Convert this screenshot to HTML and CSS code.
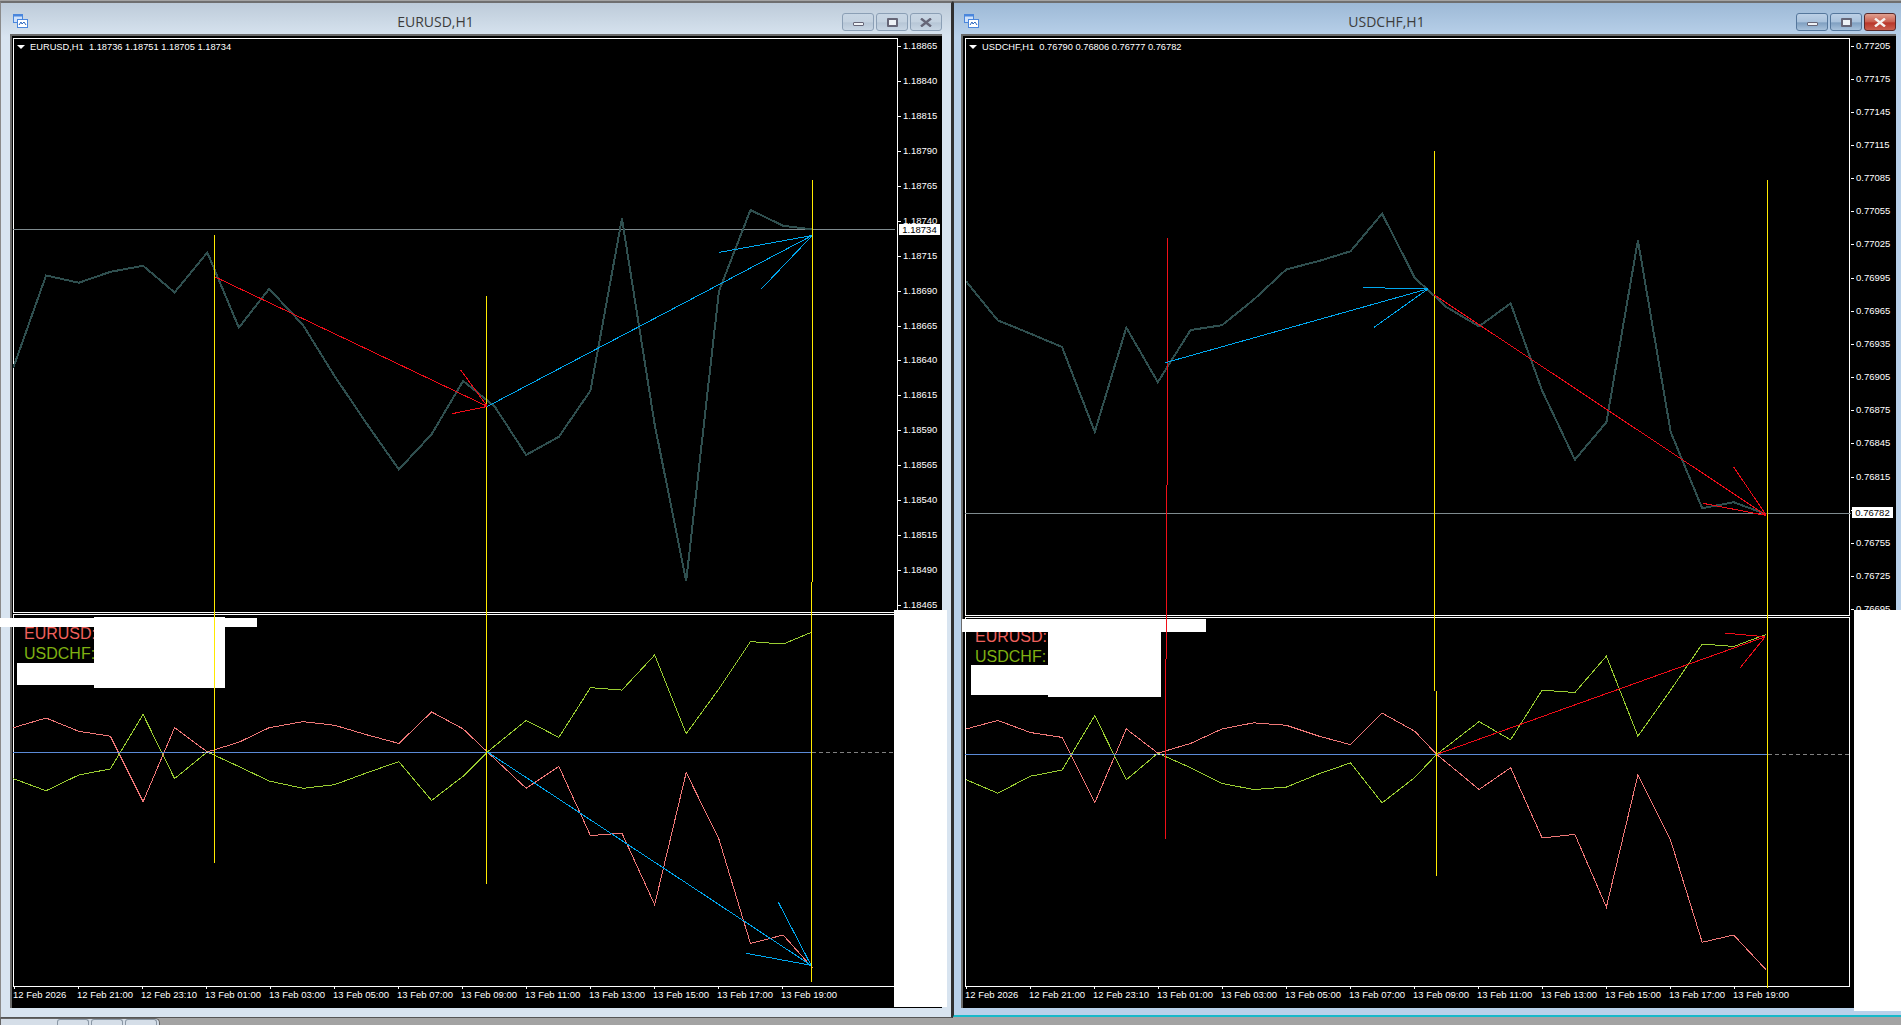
FILE: index.html
```html
<!DOCTYPE html>
<html lang="en">
<head>
<meta charset="utf-8">
<title>EURUSD,H1 / USDCHF,H1</title>
<link rel="stylesheet" href="styles.css">
</head>
<body>
<div class="desktop">

  <section class="window window-left">
    <header class="titlebar">
      <svg class="app-icon" viewBox="0 0 15 14"><rect x="0.5" y="0.5" width="9" height="8" fill="#cfe2fb" stroke="#4a86dc"/><rect x="0.5" y="0.5" width="9" height="2" fill="#4a86dc"/><rect x="4.5" y="5.5" width="10" height="8" fill="#fff" stroke="#4a86dc"/><path d="M6 11l2-3 1 2 2-2 2 3" fill="none" stroke="#2a66c0"/></svg>
      <h1 class="title">EURUSD,H1</h1>
      <div class="controls">
        <button class="ctl"><span class="i-min"></span></button>
        <button class="ctl"><span class="i-max"></span></button>
        <button class="ctl"><svg class="i-x" viewBox="0 0 12 9"><path d="M1 0.5l10 8M11 0.5l-10 8" fill="none" stroke="#667" stroke-width="2.4"/></svg></button>
      </div>
    </header>
    <div class="chart">
      <div class="pane pane-main">
        <div class="symbol"><i class="tri"></i><span>EURUSD,H1&nbsp; 1.18736 1.18751 1.18705 1.18734</span></div>
      </div>
      <div class="scale">
        <span>1.18865</span><span>1.18840</span><span>1.18815</span><span>1.18790</span><span>1.18765</span><span>1.18740</span><span>1.18715</span><span>1.18690</span><span>1.18665</span><span>1.18640</span><span>1.18615</span><span>1.18590</span><span>1.18565</span><span>1.18540</span><span>1.18515</span><span>1.18490</span><span>1.18465</span>
        <b class="price">1.18734</b>
      </div>
      <div class="pane pane-sub">
        <div class="legend"><span class="eur">EURUSD:</span><span class="chf">USDCHF:</span></div>
      </div>
      <div class="scale-empty"></div>
      <div class="times">
        <span>12 Feb 2026</span><span>12 Feb 21:00</span><span>12 Feb 23:10</span><span>13 Feb 01:00</span><span>13 Feb 03:00</span><span>13 Feb 05:00</span><span>13 Feb 07:00</span><span>13 Feb 09:00</span><span>13 Feb 11:00</span><span>13 Feb 13:00</span><span>13 Feb 15:00</span><span>13 Feb 17:00</span><span>13 Feb 19:00</span>
      </div>
    </div>
  </section>

  <section class="window window-right">
    <header class="titlebar">
      <svg class="app-icon" viewBox="0 0 15 14"><rect x="0.5" y="0.5" width="9" height="8" fill="#cfe2fb" stroke="#4a86dc"/><rect x="0.5" y="0.5" width="9" height="2" fill="#4a86dc"/><rect x="4.5" y="5.5" width="10" height="8" fill="#fff" stroke="#4a86dc"/><path d="M6 11l2-3 1 2 2-2 2 3" fill="none" stroke="#2a66c0"/></svg>
      <h1 class="title">USDCHF,H1</h1>
      <div class="controls">
        <button class="ctl"><span class="i-min"></span></button>
        <button class="ctl"><span class="i-max"></span></button>
        <button class="ctl ctl-close"><svg class="i-x" viewBox="0 0 12 9"><path d="M1 0.5l10 8M11 0.5l-10 8" fill="none" stroke="#f4f0ee" stroke-width="2.4"/></svg></button>
      </div>
    </header>
    <div class="chart">
      <div class="pane pane-main">
        <div class="symbol"><i class="tri"></i><span>USDCHF,H1&nbsp; 0.76790 0.76806 0.76777 0.76782</span></div>
      </div>
      <div class="scale">
        <span>0.77205</span><span>0.77175</span><span>0.77145</span><span>0.77115</span><span>0.77085</span><span>0.77055</span><span>0.77025</span><span>0.76995</span><span>0.76965</span><span>0.76935</span><span>0.76905</span><span>0.76875</span><span>0.76845</span><span>0.76815</span><span>0.76785</span><span>0.76755</span><span>0.76725</span><span>0.76695</span>
        <b class="price">0.76782</b>
      </div>
      <div class="pane pane-sub">
        <div class="legend"><span class="eur">EURUSD:</span><span class="chf">USDCHF:</span></div>
      </div>
      <div class="scale-empty"></div>
      <div class="times">
        <span>12 Feb 2026</span><span>12 Feb 21:00</span><span>12 Feb 23:10</span><span>13 Feb 01:00</span><span>13 Feb 03:00</span><span>13 Feb 05:00</span><span>13 Feb 07:00</span><span>13 Feb 09:00</span><span>13 Feb 11:00</span><span>13 Feb 13:00</span><span>13 Feb 15:00</span><span>13 Feb 17:00</span><span>13 Feb 19:00</span>
      </div>
    </div>
  </section>

  <div class="tabstrip"><i></i><i></i><i></i></div>

  <div class="patch p1"></div><div class="patch p2"></div><div class="patch p3"></div><div class="patch p4"></div>
  <div class="patch p5"></div><div class="patch p6"></div><div class="patch p7"></div><div class="patch p8"></div>

  <svg class="drawing" viewBox="0 0 1568 845">
    <g class="left">
      <line class="price-line" x1="11" y1="189" x2="738" y2="189"/>
      <polyline class="close" points="11,303 38,227 65,233 91,224 118,219 144,241 171,208 197,270 222,238 250,268 276,310 303,350 329,387 356,358 382,314 408,335 434,375 461,360 487,322 513,180 540,350 566,479 593,240 619,173 646,186 670,189"/>
      <polyline class="eur-line" points="11,600 38,592 65,603 91,607 118,661 144,600 171,620 197,612 222,600 250,595 276,598 303,606 329,613 356,587 382,601 402,620 434,650 461,632 487,689 513,687 540,746 566,637 593,692 619,778 646,771 670,798"/>
      <polyline class="chf-line" points="11,642 38,652 65,639 91,634 118,589 144,642 171,620 197,632 222,644 250,650 276,647 303,637 329,628 356,660 382,640 402,620 434,594 461,608 487,567 513,569 540,540 566,605 593,568 619,529 646,531 670,521"/>
      <line class="zero" x1="11" y1="620.5" x2="670" y2="620.5"/>
      <line class="zero-dash" x1="670" y1="620.5" x2="737" y2="620.5"/>
      <line class="knot" x1="167" y1="620.5" x2="177" y2="620.5"/>
      <path class="v-yellow" d="M177 194V712M401.5 244V729M670 148V480M669 480V810"/>
      <path class="arrow-red" d="M177 228L402 335M380 305L402 335M373 341L402 335"/>
      <path class="arrow-blue" d="M402 335L670 194M593 208L670 194M628 238L670 194"/>
      <path class="arrow-blue" d="M402 620L669 796M642 744L669 796M615 786L669 796"/>
    </g>
    <g class="right">
      <line class="price-line" x1="796" y1="423.5" x2="1527" y2="423.5"/>
      <polyline class="close" points="797,232 823,264 850,275 876,286 903,356 929,270 955,315 982,272 1008,268 1034,247 1061,222 1088,215 1114,207 1140,176 1167,229 1193,253 1220,269 1246,250 1272,322 1299,379 1325,348 1351,198 1378,356 1404,419 1430,414 1457,424"/>
      <polyline class="eur-line" points="797,601 823,594 850,604 876,608 903,662 929,601 955,621 982,613 1008,601 1034,596 1061,598 1088,607 1114,614 1140,588 1167,603 1185,622 1220,651 1246,633 1272,691 1299,688 1325,748 1351,639 1378,693 1404,777 1430,771 1457,800"/>
      <polyline class="chf-line" points="797,643 823,654 850,640 876,635 903,590 929,643 955,621 982,633 1008,646 1034,651 1061,649 1088,638 1114,629 1140,662 1167,641 1185,622 1220,595 1246,610 1272,569 1299,571 1325,541 1351,607 1378,569 1404,531 1430,533 1457,523"/>
      <line class="zero" x1="796" y1="622" x2="1458" y2="622"/>
      <line class="zero-dash" x1="1458" y1="622" x2="1527" y2="622"/>
      <line class="knot" x1="952" y1="622" x2="962" y2="622"/>
      <path class="v-red" d="M963 196V400M962 400V543M961 543V692"/>
      <path class="v-yellow" d="M1183 124V570M1185 570V722M1458 148V815"/>
      <path class="arrow-blue" d="M961 299L1178 238M1124 237L1178 238M1133 270L1178 238"/>
      <path class="arrow-red" d="M1183 243L1457 425M1430 385L1457 425M1405 415L1457 425"/>
      <path class="arrow-red" d="M1185 622L1456 525M1423 522L1456 525M1435 551L1456 525"/>
    </g>
  </svg>
</div>
</body>
</html>
```
FILE: styles.css
```css
* { box-sizing: border-box; }
html, body { margin: 0; height: 100%; overflow: hidden; }
body { background: #a3a3a3; font-family: "Liberation Sans", Arial, sans-serif; }

.desktop { position: relative; width: 1901px; height: 1025px; overflow: hidden; }

/* windows on the desktop */
.window {
  position: absolute;
  top: 1px;
  display: flex;
  flex-direction: column;
  border-top: 2px solid #6f6f6f;
}
.window-left {
  left: 0;
  width: 953px;
  height: 1017px;
  padding: 0 9px 9px 9px;
  border-left: 1px solid #8a8a8a;
  border-right: 2px solid #303030;
  border-bottom: 1px solid #555;
  background: linear-gradient(#bdcbd9 0, #d8e4f0 34px, #d8e4f0 100%);
}
.window-right {
  left: 953px;
  width: 948px;
  height: 1016px;
  padding: 0 5px 7px 7px;
  border-left: 1px solid #303030;
  border-bottom: 2px solid #17b9c9;
  background: linear-gradient(#9db9d6 0, #b9d1ea 34px, #b9d1ea 100%);
}

.titlebar {
  position: relative;
  flex: 0 0 31px;
  display: flex;
  align-items: center;
}
.app-icon { width: 15px; height: 14px; margin: 4px 0 0 3px; flex: none; }
.title {
  position: absolute;
  left: 0;
  right: 0;
  top: 11px;
  margin: 0;
  text-align: center;
  font: 400 14px/16px "Open Sans", sans-serif;
  color: #3c3c3c;
  pointer-events: none;
}
.window-left .title { padding-right: 81px; }
.window-right .title { padding-right: 84px; }

.controls { margin-left: auto; display: flex; gap: 2px; align-self: flex-start; margin-top: 10px; }
.ctl {
  width: 32px;
  height: 18px;
  padding: 0;
  display: flex;
  align-items: center;
  justify-content: center;
  border: 1px solid #8b9fb5;
  border-radius: 3px;
  background: linear-gradient(#c8d6e4 0, #c4d2e0 50%, #b6c6d6 55%, #c8d6e4 100%);
}
.window-right .ctl { border-color: #55779c; background: linear-gradient(#bcd0e6 0, #a9c2dc 50%, #7f9fc0 55%, #a8c2dc 100%); }
.window-right .ctl-close { border-color: #5a2a2a; background: linear-gradient(#e0a090 0, #c95f50 50%, #b8362a 55%, #c96050 100%); }
.i-min { width: 11px; height: 4px; margin-top: 3px; background: #eef2f6; border: 1px solid #667; border-radius: 1px; }
.i-max { width: 11px; height: 9px; background: #eef2f6; border: 2px solid #667; border-radius: 1px; box-shadow: inset 0 0 0 2px #eef2f6; position: relative; }
.i-x { width: 12px; height: 9px; }

/* chart client area */
.chart {
  flex: 1;
  display: grid;
  background: #000;
  border-top: 2px solid #6a6a6a;
  border-left: 2px solid #6a6a6a;
  padding: 2px 0 0 1px;
  color: #fff;
}
.window-left .chart { grid-template-columns: 885px 1fr; grid-template-rows: 575px 374px 1fr; }
.window-right .chart { padding-left: 2px; grid-template-columns: 885px 1fr; grid-template-rows: 578px 371px 1fr; }

.pane { position: relative; border: 1px solid #fff; min-width: 0; }
.pane-main { padding: 2px 0 0 3px; }
.pane-sub { margin-top: 1px; }

.symbol { display: flex; align-items: center; gap: 5px; font-size: 9.3px; line-height: 12px; color: #fff; white-space: nowrap; }
.tri { width: 0; height: 0; border-left: 4px solid transparent; border-right: 4px solid transparent; border-top: 4px solid #fff; }

.scale {
  position: relative;
  display: flex;
  flex-direction: column;
  padding-top: 2px;
  overflow: hidden;
}
.window-right .scale { padding: 1.5px 0 0 1px; }
.scale span {
  flex: none;
  display: flex;
  align-items: flex-start;
  font-size: 9.5px;
  line-height: 12px;
  white-space: nowrap;
}
.window-left .scale span { height: 34.94px; }
.window-right .scale span { height: 33.17px; }
.scale span::before { content: ""; flex: none; width: 3px; height: 1px; margin: 6px 2px 0 0; background: #fff; }
.price {
  position: absolute;
  left: 1px;
  width: 41px;
  height: 11px;
  background: #fff;
  color: #000;
  font: 400 9.5px/11px "Liberation Sans", Arial, sans-serif;
  text-align: center;
}
.window-left .price { top: 186px; }
.window-right .price { top: 469px; left: 2px; }

.legend {
  position: absolute;
  left: 10px;
  top: 9px;
  display: flex;
  flex-direction: column;
  font-size: 16px;
  line-height: 20px;
}
.window-right .legend { left: 9px; top: 9px; }
.eur { color: #f0605c; }
.chf { color: #7fb012; }

.times {
  grid-column: 1 / -1;
  display: flex;
  white-space: nowrap;
  font-size: 9.5px;
  line-height: 12px;
  padding-top: 2px;
}
.times span { position: relative; flex: 0 0 64px; }
.times span::before { content: ""; position: absolute; left: 1px; top: -3px; width: 1px; height: 3px; background: #fff; }

/* bottom tab strip */
.tabstrip {
  position: absolute;
  left: 0;
  top: 1018px;
  width: 160px;
  height: 7px;
  display: flex;
  gap: 2px;
  padding-left: 56px;
  background: #d5dee8;
  border: 1px solid #666;
  border-bottom: 0;
  border-radius: 0 5px 0 0;
}
.tabstrip i { width: 32px; border: 1px solid #8a97a5; border-bottom: 0; border-radius: 3px 3px 0 0; }

/* white blocked-out areas lying over the charts */
.patch { position: absolute; background: #fff; }
.p1 { left: 0; top: 618px; width: 257px; height: 9px; }
.p2 { left: 94px; top: 617px; width: 131px; height: 71px; }
.p3 { left: 17px; top: 663px; width: 77px; height: 22px; }
.p4 { left: 894px; top: 610px; width: 53px; height: 397px; }
.p5 { left: 962px; top: 619px; width: 244px; height: 13px; }
.p6 { left: 1048px; top: 632px; width: 113px; height: 65px; }
.p7 { left: 971px; top: 665px; width: 77px; height: 30px; }
.p8 { left: 1854px; top: 610px; width: 47px; height: 401px; }

/* free-canvas chart drawing */
.drawing { position: absolute; left: 0; top: 0; width: 1901px; height: 1025px; pointer-events: none; shape-rendering: crispEdges; }
.drawing * { fill: none; vector-effect: non-scaling-stroke; stroke-width: 1px; }
.price-line { stroke: #7f8b8f; }
.drawing .close { stroke: #2f4f4f; stroke-width: 2px; }
.eur-line { stroke: #f07878; }
.chf-line { stroke: #9acd32; }
.zero { stroke: #5b8ad6; }
.zero-dash { stroke: #808080; stroke-dasharray: 4 3; }
.knot { stroke: #dddddd; stroke-dasharray: 2 2; }
.v-yellow { stroke: #ffea00; }
.v-red { stroke: #f01018; }
.arrow-red { stroke: #f00c18; }
.arrow-blue { stroke: #00a8f0; }
```
